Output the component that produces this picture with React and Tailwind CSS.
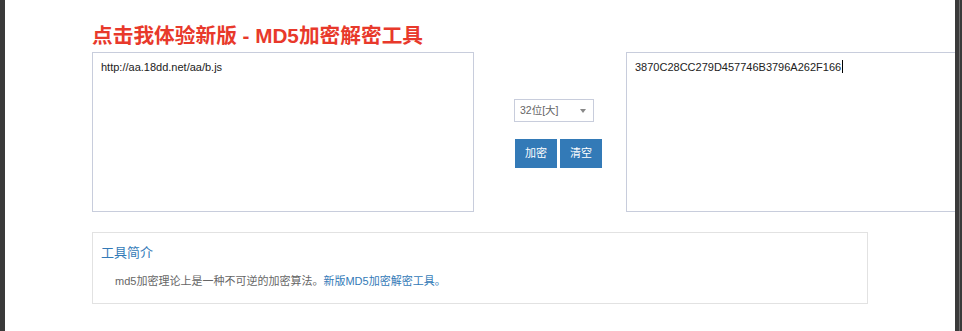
export default function App() {
  const font = { fontFamily: '"Liberation Sans", Arial, "Noto Sans CJK SC", sans-serif' };

  return (
    <div className="flex h-[331px] w-[962px] overflow-hidden bg-white" style={font}>
      <div className="w-[5px] shrink-0 bg-[#3a3a3a]" />

      <div className="flex-1 overflow-hidden pl-[87px]">
        <h1 className="mt-[24px] h-[24px] whitespace-nowrap text-[20.7px] font-bold leading-[24px] text-[#e8392b]">
          点击我体验新版 - MD5加密解密工具
        </h1>

        <div className="mt-[4px] flex">
          <div className="h-[160px] w-[382px] shrink-0 border border-[#c8cddc] px-[8px] py-[7px] text-[11px] leading-[14px] text-[#222]">
            http://aa.18dd.net/aa/b.js
          </div>

          <div className="w-[152px] shrink-0 pl-[40px] pt-[47px]">
            <div className="flex h-[23px] w-[80px] items-center justify-between border border-[#c8cddc] pl-[5px] pr-[7px] text-[10.5px] text-[#666]">
              <span>32位[大]</span>
              <span className="h-0 w-0 border-x-[3.5px] border-t-[4px] border-x-transparent border-t-[#888]" />
            </div>
            <div className="mt-[17px] flex gap-[3px] pl-[1px]">
              <button className="h-[29px] w-[42px] bg-[#337ab7] text-[11px] text-white">加密</button>
              <button className="h-[29px] w-[42px] bg-[#337ab7] text-[11px] text-white">清空</button>
            </div>
          </div>

          <div className="h-[160px] w-[382px] shrink-0 border border-[#c8cddc] px-[8px] py-[7px] text-[11px] leading-[14px] text-[#222]">
            <span className="whitespace-nowrap">3870C28CC279D457746B3796A262F166</span>
            <span className="ml-[1px] inline-block h-[13px] w-[1px] bg-black align-[-2px]" />
          </div>
        </div>

        <div className="mt-[20px] h-[72px] w-[776px] border border-[#e2e2e2] px-[8px] pt-[11px]">
          <div className="text-[13px] leading-[18px] text-[#337ab7]">工具简介</div>
          <div className="mt-[12px] pl-[14px] text-[11px] leading-[14px] text-[#666]">
            md5加密理论上是一种不可逆的加密算法。
            <span className="text-[#337ab7]">新版MD5加密解密工具。</span>
          </div>
        </div>
      </div>

      <div className="flex w-[7px] shrink-0 bg-[#3a3a3a]">
        <div className="ml-[4px] w-[1px] bg-[#6a6a6a]" />
      </div>
    </div>
  );
}
